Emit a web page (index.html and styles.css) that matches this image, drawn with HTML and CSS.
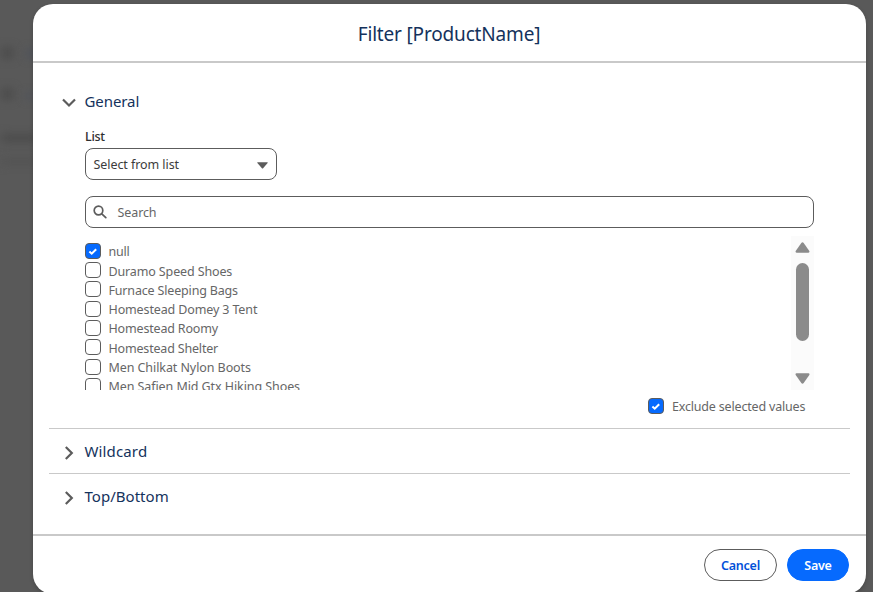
FILE: index.html
```
<!DOCTYPE html>
<html lang="en">
<head>
<meta charset="utf-8">
<title>Filter</title>
<link rel="stylesheet" href="styles.css">
</head>
<body>
<div class="backdrop" aria-hidden="true">
  <i class="smudge s1"></i><i class="smudge s2"></i><i class="smudge s3"></i><i class="smudge s4"></i><i class="smudge s5"></i><i class="smudge s6"></i>
</div>
<div class="modal" role="dialog">
  <header class="modal-header"><h1 class="title">Filter [ProductName]</h1></header>
  <main class="modal-body">
    <section class="section general">
      <h2 class="section-head">
        <svg class="chevron" width="14" height="14" viewBox="0 0 14 14"><path d="M1 3.5 7 9.5 13 3.5"/></svg>
        <span class="t-general">General</span>
      </h2>
      <div class="fields">
        <label class="field-label">List</label>
        <div class="select"><span class="t-select">Select from list</span>
          <svg width="11" height="7" viewBox="0 0 11 7"><path d="M.6.3h9.8q.6.1.2.6L6.1 6.3q-.6.6-1.2 0L.4.9Q0 .4.6.3Z"/></svg>
        </div>
        <div class="search">
          <svg width="14" height="14" viewBox="0 0 14 14"><circle cx="5.5" cy="5.5" r="4.3"/><path d="M8.8 8.8 12.8 12.6"/></svg>
          <span class="t-search">Search</span>
        </div>
        <div class="list">
          <ul class="options">
            <li><span class="box checked"><svg viewBox="0 0 16 16"><path d="M4.4 8.6 6.7 10.7 11.2 6.2"/></svg></span><span class="o0">null</span></li>
            <li><span class="box"></span><span class="o1">Duramo Speed Shoes</span></li>
            <li><span class="box"></span><span class="o2">Furnace Sleeping Bags</span></li>
            <li><span class="box"></span><span class="o3">Homestead Domey 3 Tent</span></li>
            <li><span class="box"></span><span class="o4">Homestead Roomy</span></li>
            <li><span class="box"></span><span class="o5">Homestead Shelter</span></li>
            <li><span class="box"></span><span class="o6">Men Chilkat Nylon Boots</span></li>
            <li><span class="box"></span><span class="o7">Men Safien Mid Gtx Hiking Shoes</span></li>
          </ul>
          <div class="scrollbar">
            <svg class="arrow" width="15" height="11" viewBox="0 0 15 11"><path d="M6.3.9q1.2-1.2 2.4 0L14.3 9q.6 1.6-.8 1.7h-12Q.1 10.6.7 9Z"/></svg>
            <div class="thumb"></div>
            <svg class="arrow down" width="15" height="11" viewBox="0 0 15 11"><path d="M6.3.9q1.2-1.2 2.4 0L14.3 9q.6 1.6-.8 1.7h-12Q.1 10.6.7 9Z"/></svg>
          </div>
        </div>
        <div class="exclude"><span class="box checked"><svg viewBox="0 0 16 16"><path d="M4.4 8.6 6.7 10.7 11.2 6.2"/></svg></span><span class="t-exclude">Exclude selected values</span></div>
      </div>
    </section>
    <section class="section">
      <h2 class="section-head">
        <svg class="chevron right" width="14" height="14" viewBox="0 0 14 14"><path d="M3.8 1 9.8 7 3.8 13"/></svg>
        <span class="t-wild">Wildcard</span>
      </h2>
    </section>
    <section class="section">
      <h2 class="section-head">
        <svg class="chevron right" width="14" height="14" viewBox="0 0 14 14"><path d="M3.8 1 9.8 7 3.8 13"/></svg>
        <span class="t-top">Top/Bottom</span>
      </h2>
    </section>
  </main>
  <footer class="modal-footer">
    <button class="btn cancel"><span>Cancel</span></button>
    <button class="btn save"><span>Save</span></button>
  </footer>
</div>
</body>
</html>
```
FILE: styles.css
```
* { box-sizing: border-box; margin: 0; padding: 0; }
html, body { width: 100%; height: 592px; overflow: hidden; }
body { background: #595959; font: 12.5px/20px "Noto Sans", "Open Sans", sans-serif; color: #666; padding: 4px 7px 0 33px; position: relative; }
span, h1 { white-space: nowrap; }
.backdrop { position: absolute; inset: 0; overflow: hidden; }
.smudge { position: absolute; background: #4b4b4b; filter: blur(4px); }
.s1 { left: 2px; top: 47px; width: 11px; height: 12px; }
.s2 { left: 26px; top: 49px; width: 12px; height: 9px; background: #4f535a; }
.s3 { left: 2px; top: 88px; width: 11px; height: 12px; }
.s4 { left: 25px; top: 93px; width: 12px; height: 6px; background: #4f535a; }
.s5 { left: 2px; top: 134px; width: 36px; height: 8px; }
.s6 { left: 2px; top: 158px; width: 36px; height: 7px; background: #535353; }
.modal { position: relative; height: 590px; background: #fff; border-radius: 20px; box-shadow: 0 2px 4px rgba(0,0,0,.2); display: flex; flex-direction: column; }
.modal-header { height: 59px; border-bottom: 2px solid #c9c9c9; display: flex; justify-content: center; padding: 15px 1px 0 0; flex: none; }
.title { font-size: 19px; line-height: 30px; font-weight: 400; color: #14325c; letter-spacing: -.17px; }
.modal-body { height: 471px; padding: 0 16px; flex: none; }
.section { border-bottom: 1px solid #c9c9c9; height: 45px; padding: 12px 0 0 13px; }
.section:last-child { border: 0; }
.section.general { height: 366px; padding-top: 28px; }
.section-head { display: flex; align-items: center; gap: 8.5px; height: 20px; font-size: 15px; font-weight: 400; color: #14325c; }
.chevron { margin-top: 4px; fill: none; stroke: #5c5c5c; stroke-width: 2.2; flex: none; }
.t-general { letter-spacing: -.08px; }
.t-wild { letter-spacing: .14px; }
.t-top { letter-spacing: .03px; }
.fields { padding: 15px 0 0 23px; width: 752px; }
.field-label { display: block; height: 22px; padding-top: 1px; color: #2e2e2e; font-weight: 500; letter-spacing: -.3px; }
.select { display: flex; align-items: center; justify-content: space-between; width: 192px; height: 32px; border: 1px solid #5c5c5c; border-radius: 8px; padding: 0 8.5px 0 7.5px; color: #3c3c3c; }
.select svg { fill: #5c5c5c; margin-top: 3px; }
.t-select { letter-spacing: -.07px; padding-top: 2px; }
.search { display: flex; align-items: center; gap: 10.5px; margin-top: 16px; height: 32px; border: 1px solid #5c5c5c; border-radius: 8px; padding-left: 7px; }
.search svg { fill: none; stroke: #5c5c5c; stroke-width: 1.7; stroke-linecap: round; }
.t-search { letter-spacing: -.1px; padding-top: 2px; }
.list { display: flex; justify-content: space-between; height: 154px; margin-top: 8px; overflow: hidden; }
.options { list-style: none; padding-top: 5.2px; }
.options li { display: flex; align-items: center; gap: 7.5px; height: 19.29px; }
.options li > span:last-child { padding-top: 3px; }
.o0 { letter-spacing: -.2px; }
.o1 { letter-spacing: -.13px; }
.o2 { letter-spacing: -.17px; }
.o3 { letter-spacing: -.13px; }
.o4 { letter-spacing: -.17px; }
.o5 { letter-spacing: -.18px; }
.o6 { letter-spacing: -.08px; }
.o7 { letter-spacing: -.08px; }
.t-exclude { letter-spacing: -.18px; padding-top: 2px; }
.box { width: 16px; height: 16px; border: 1px solid #5c5c5c; border-radius: 4px; background: #fff; flex: none; display: flex; }
.box.checked { background: #066afe; }
.box svg { width: 16px; height: 16px; margin: -1px; flex: none; fill: none; stroke: #fff; stroke-width: 2; }
.scrollbar { width: 23px; background: #fbfbfb; display: flex; flex-direction: column; align-items: center; padding: 6px 0 6px; }
.arrow { fill: #8b8b8b; flex: none; }
.thumb { width: 13px; height: 78px; margin-top: 10px; border-radius: 7px; background: #8b8b8b; }
.down { margin-top: auto; transform: rotate(180deg); }
.exclude { display: flex; align-items: center; gap: 8px; height: 20px; margin: 6px 0 0 563px; }
.modal-footer { border-top: 2px solid #c9c9c9; display: flex; gap: 10px; justify-content: flex-end; padding: 13px 17px 0 0; flex: 1; }
.btn { height: 32px; border-radius: 16px; font: 600 12.5px/18px "Noto Sans", sans-serif; border: 1px solid #5c5c5c; background: #fff; color: #0250d9; padding-top: 2px; letter-spacing: -.25px; }
.cancel { width: 73px; }
.save { width: 62px; background: #066afe; border-color: #066afe; color: #fff; }
```
